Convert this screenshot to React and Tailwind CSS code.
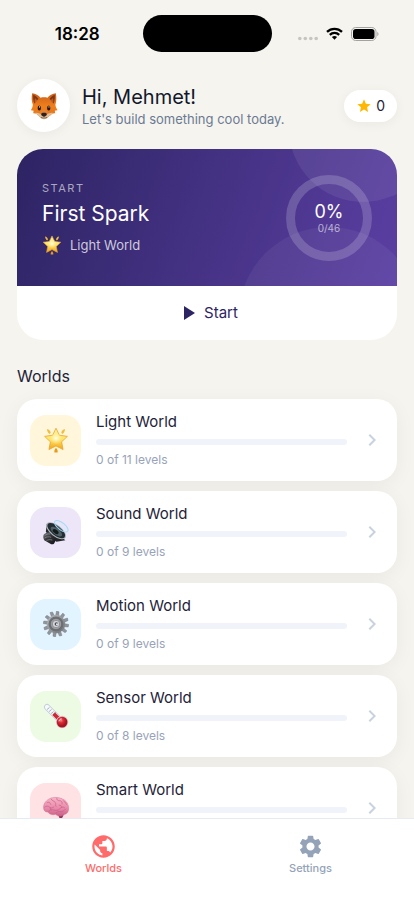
import {MdPublic, MdSettings, MdStar, MdPlayArrow, MdChevronRight} from 'react-icons/md';

function FoxIcon({className}){
	return (
		<svg viewBox="0 0 32 32" className={className} aria-hidden="true">
			<defs>
				<linearGradient id="foxFace" x1="0" y1="0" x2="0" y2="1">
					<stop offset="0" stopColor="#c9601b"/>
					<stop offset=".5" stopColor="#f07f1c"/>
					<stop offset="1" stopColor="#e0701a"/>
				</linearGradient>
			</defs>
			<path d="M2.500 1.500c3.700.3 7.500 2.500 9.500 5 2.500-.7 5.500-.7 8 0 2-2.500 5.800-4.700 9.500-5 1 5 .7 9.500-.5 13 .2 2.500 1.400 4.500 2.500 6.300-1.400.3-2.300.5-3.200.7.3 1 .5 1.800.4 2.800-2.200 0-3.700.7-5.200 2.200C20.700 28.500 18.500 31 16 31s-4.700-2.500-7-4.500c-1.500-1.500-3-2.200-5.200-2.200-.1-1 .1-1.800.4-2.800-.9-.2-1.800-.4-3.200-.7 1.100-1.800 2.100-3.800 2.300-6.300C1.800 11 1.500 6.500 2.500 1.500z" fill="url(#foxFace)"/>
			<path d="M3.700 3c2.500 1 4.800 2.900 6 5-2 1.200-3.700 3.100-4.700 5.300C3.800 10 3.300 6.500 3.700 3zM28.300 3c-2.500 1-4.800 2.900-6 5 2 1.200 3.700 3.100 4.700 5.300 1.200-3.300 1.700-6.800 1.300-10.300z" fill="#7d3616"/>
			<path d="M5.700 7c1.300.7 2.300 1.800 2.700 3-1.200.8-2 1.900-2.700 3.100C5.100 11 5.200 9 5.700 7zM26.300 7c-1.300.7-2.300 1.800-2.700 3 1.200.8 2 1.900 2.700 3.100.6-2.100.5-4.100 0-6.100z" fill="#bd5a28"/>
			<path d="M3.800 24.300c2.200-.9 5-.8 7.200.4 1.500.8 3.300 1 5 1s3.500-.2 5-1c2.200-1.200 5-1.300 7.200-.4-2.200.1-3.700.7-5.200 2.200-2.300 2-4.500 4.500-7 4.500s-4.700-2.500-7-4.500c-1.500-1.500-3-2.100-5.200-2.200z" fill="#dcc19b"/>
			<path d="M11.500 24c1-2.500 2.700-4 4.500-4s3.500 1.500 4.500 4l-2 3.500h-5z" fill="#e48435"/>
			<ellipse cx="10.600" cy="18.200" rx="1.900" ry="2.900" fill="#27170f"/>
			<ellipse cx="21.400" cy="18.200" rx="1.900" ry="2.900" fill="#27170f"/>
			<circle cx="10.900" cy="17" r=".6" fill="#fff"/>
			<circle cx="21.700" cy="17" r=".6" fill="#fff"/>
			<path d="M12.800 25.500c0-1.200 1.400-1.700 3.200-1.700s3.200.5 3.200 1.700-1.700 2.700-3.200 2.700-3.200-1.500-3.200-2.700z" fill="#2b211f"/>
			<path d="M12.500 29c2.300 1 4.700 1 7 0" stroke="#5c4335" strokeWidth=".8" fill="none"/>
		</svg>
	)
}

function GlowStarIcon({className}){
	return (
		<svg viewBox="0 0 32 32" className={className} aria-hidden="true">
			<defs>
				<linearGradient id="glowStar" x1="0" y1="0" x2="0" y2="1">
					<stop offset="0" stopColor="#fff3a3"/>
					<stop offset=".5" stopColor="#ffe66b"/>
					<stop offset="1" stopColor="#f2a317"/>
				</linearGradient>
				<radialGradient id="glowCore">
					<stop offset="0" stopColor="#fffef0"/>
					<stop offset="1" stopColor="#fff3a0" stopOpacity="0"/>
				</radialGradient>
			</defs>
			<path d="M5 2.500c2.300.3 4 2 4.500 4.700L8.200 8.600C5.800 7 5 5 5 2.500zM27 2.500c-2.300.3-4 2-4.500 4.700l1.300 1.400C26.200 7 27 5 27 2.500z" fill="#f3bd35"/>
			<path d="M16 25.500c1.800 2 2.300 3.700 2 5.800h-4c-.3-2.100.2-3.800 2-5.800z" fill="#e99a1b"/>
			<path d="M16 1.500l4.200 8.700 9.800 1.300-7.100 6.800 1.800 9.500L16 23.300l-8.700 4.500 1.800-9.500L2 11.500l9.800-1.300z" fill="url(#glowStar)" stroke="#e9a52a" strokeWidth="1" strokeLinejoin="round"/>
			<circle cx="16" cy="14" r="7.500" fill="url(#glowCore)"/>
		</svg>
	)
}

function SpeakerIcon({className}){
	return (
		<svg viewBox="0 0 32 32" className={className} aria-hidden="true">
			<defs>
				<linearGradient id="speakerBody" x1="0" y1="0" x2="1" y2="1">
					<stop offset="0" stopColor="#77797d"/>
					<stop offset=".45" stopColor="#303236"/>
					<stop offset="1" stopColor="#111214"/>
				</linearGradient>
			</defs>
			<path d="M4.500 6l-1 10 13 12 11-2z" fill="#25272a"/>
			<path d="M.8 19.500c2-2.500 5-3.500 8-3l8.200 7.500-3.500 6.500c-1.500 1-3.200.8-4.500 0L1.500 26c-1.200-1.800-1.500-4.500-.7-6.500z" fill="url(#speakerBody)"/>
			<path d="M2 20.500c2-1.700 4-2.300 6.500-2M2 23.500c2.500-1.700 5-2 8-1M4 27c2-1.700 4.500-2 7.500-1" stroke="#8d8f94" strokeWidth=".9" fill="none"/>
			<ellipse cx="16" cy="14.500" rx="14.500" ry="7" transform="rotate(38 16 14.500)" fill="#aeb4b9"/>
			<ellipse cx="16.300" cy="14.300" rx="13.200" ry="5.900" transform="rotate(38 16.300 14.300)" fill="#222d33"/>
			<ellipse cx="16.500" cy="15.500" rx="8.500" ry="3.700" transform="rotate(38 16.500 15.500)" fill="#4e6167"/>
			<ellipse cx="15.500" cy="15.500" rx="4.200" ry="2.300" transform="rotate(38 15.500 15.500)" fill="#14191c"/>
			<ellipse cx="22.500" cy="9" rx="10" ry="4.500" transform="rotate(38 22.500 9)" fill="#c9ecfa" fillOpacity=".25" stroke="#a5daf0" strokeWidth="1.200"/>
		</svg>
	)
}

function GearIcon({className}){
	const teeth = Array.from({length:12},(_,i)=>i*30)
	return (
		<svg viewBox="0 0 32 32" className={className} aria-hidden="true">
			<defs>
				<linearGradient id="gearMetal" x1="0" y1="0" x2="1" y2="1">
					<stop offset="0" stopColor="#b9bcc0"/>
					<stop offset="1" stopColor="#6d7074"/>
				</linearGradient>
			</defs>
			{
				teeth.map((angle)=>(
					<path key={angle} d="M14 6.500l.4-6.300 3.200.4.500 5.900z" fill="#919499" stroke="#686b70" strokeWidth=".4"
					transform={`rotate(${angle + 8} 16 16)`}/>
				))
			}
			<circle cx="16" cy="16" r="11.300" fill="url(#gearMetal)"/>
			<circle cx="16" cy="16" r="9.200" fill="#6c6f74"/>
			<circle cx="16" cy="16" r="7" fill="#9a9da1" stroke="#5d6064" strokeWidth=".8"/>
			<circle cx="16" cy="16" r="4.500" fill="#d3d5d8" stroke="#6d7074" strokeWidth=".7"/>
			<circle cx="16.500" cy="16" r="2.200" fill="#484b4f"/>
			<circle cx="17.200" cy="16.200" r="1.200" fill="#eef6fb"/>
		</svg>
	)
}

function ThermometerIcon({className}){
	return (
		<svg viewBox="0 0 32 32" className={className} aria-hidden="true">
			<defs>
				<radialGradient id="bulb" cx=".4" cy=".35">
					<stop offset="0" stopColor="#f58a8a"/>
					<stop offset=".4" stopColor="#df2f38"/>
					<stop offset="1" stopColor="#a81420"/>
				</radialGradient>
			</defs>
			<path d="M5 5l17 17" stroke="#c3cbd5" strokeWidth="7.500" strokeLinecap="round"/>
			<path d="M5 5l17 17" stroke="#f6f9fc" strokeWidth="5.500" strokeLinecap="round"/>
			<path d="M13 13l9 9" stroke="#cf2a34" strokeWidth="4.600"/>
			<path d="M5 8l3-2.500M7.500 10.500l3-2.500M10 13l3-2.500M14.500 12.500l1.500-1.500" stroke="#8794a4" strokeWidth=".9"/>
			<circle cx="23.500" cy="23.500" r="7.700" fill="#d8c9cf"/>
			<circle cx="23.500" cy="23.500" r="6.600" fill="url(#bulb)"/>
			<path d="M19.800 22c.3-1.300 1.200-2.200 2.600-2.400" stroke="#fff" strokeWidth="1.200" strokeLinecap="round" fill="none"/>
		</svg>
	)
}

function BrainIcon({className}){
	return (
		<svg viewBox="0 0 32 32" className={className} aria-hidden="true">
			<defs>
				<linearGradient id="brainPink" x1="0" y1="0" x2="0" y2="1">
					<stop offset="0" stopColor="#f7b3c8"/>
					<stop offset=".6" stopColor="#e888a8"/>
					<stop offset="1" stopColor="#c85f86"/>
				</linearGradient>
			</defs>
			<path d="M17 22l8.500 1c-.5 2.500-1 4-2.500 6l-2.500.5c-.5-2.500-1.500-4.500-3.500-6z" fill="#8e3459"/>
			<path d="M16 3C9 2.500 2 7 .8 13.500c-.8 4.500 1.500 7.500 5.200 7.500 2 3 6 4 9.500 2.800 2.500 2.700 7.500 2.700 10.500.2 4-.5 5.800-4 5.500-8.500C31 8 24.500 3.200 16 3z" fill="url(#brainPink)" stroke="#cf6f92" strokeWidth=".6"/>
			<path d="M5 9.500c2.500-1.500 4 0 4.500 2M10 5c1 2.500 3.500 2 5 4s-.5 3.500 1 5M17 4c-.5 2 1 3 3.500 3s3.500 2 3 4M25 7c1 2 3.500 2 4 4.500M2 15c2-2 4.500-1.500 6 0s4 1.500 5.500-.5M7 20.500c1-2.500 4-3 6.500-2s5 .5 7-1.500 4.500-3 6-1.500M20 12.500c1.500 0 3 1 3 2.500M15.500 23c.5-2 3-3 5.500-2.500s5-1 7-3.500M9 15.500c-.5 1.500 0 2.500 1 3" stroke="#c25f86" strokeWidth=".8" strokeLinecap="round" fill="none"/>
		</svg>
	)
}

const worlds = [
	{name:'Light World', total:11, done:0, tile:'bg-[#fff6db]', Icon:GlowStarIcon},
	{name:'Sound World', total:9, done:0, tile:'bg-[#ede5f8]', Icon:SpeakerIcon},
	{name:'Motion World', total:9, done:0, tile:'bg-[#e2f4ff]', Icon:GearIcon},
	{name:'Sensor World', total:8, done:0, tile:'bg-[#edfbe5]', Icon:ThermometerIcon},
	{name:'Smart World', total:9, done:0, tile:'bg-[#ffe2e4]', Icon:BrainIcon},
]

function StatusBar(){
	return (
		<div className="grid grid-cols-[1fr_auto_1fr] items-center pt-[15px] shrink-0">
			<span className="text-center text-[17px] leading-6 font-semibold text-black pl-3">18:28</span>
			<div className="h-[37px] w-[129px] rounded-full bg-black"/>
			<div className="flex items-center justify-center gap-2 pl-1 pr-3">
				<svg viewBox="0 0 20 14" className="h-[14px] w-5" aria-hidden="true">
					<g fill="#c6c5c1">
						<circle cx="1.800" cy="11.500" r="1.800"/>
						<circle cx="7.300" cy="11.500" r="1.800"/>
						<circle cx="12.800" cy="11.500" r="1.800"/>
						<circle cx="18.200" cy="11.500" r="1.800"/>
					</g>
				</svg>
				<svg viewBox="0 0 17 13" className="h-[13px] w-[17px]" aria-hidden="true">
					<g fill="none" stroke="#000" strokeWidth="2.300">
						<path d="M1 4.900a10.800 10.800 0 0 1 15 0"/>
						<path d="M3.800 7.800a6.800 6.800 0 0 1 9.400 0"/>
					</g>
					<path d="M8.500 12.800l-2.600-2.700a3.900 3.900 0 0 1 5.200 0z" fill="#000"/>
				</svg>
				<svg viewBox="0 0 28 14" className="h-[14px] w-7" aria-hidden="true">
					<rect x=".5" y=".5" width="24.500" height="13" rx="4.200" fill="none" stroke="#a3a29f"/>
					<rect x="2" y="2" width="21.500" height="10" rx="2.800" fill="#000"/>
					<path d="M26.300 4.800c1.600.7 1.600 3.700 0 4.400z" fill="#a3a29f"/>
				</svg>
			</div>
		</div>
	)
}

function WorldCard({world}){
	const {name,total,done,tile,Icon} = world
	return (
		<button className="flex w-full items-center rounded-[20px] bg-white p-[13px] text-left shadow-[0_4px_20px_rgba(0,0,0,0.05)] cursor-pointer">
			<div className={`flex h-[51px] w-[51px] shrink-0 items-center justify-center rounded-2xl ${tile}`}>
				<Icon className="h-[26px] w-[26px]"/>
			</div>
			<div className="ml-[15px] flex flex-1 flex-col">
				<h3 className="text-[15px] leading-5 text-[#1e2339]">{name}</h3>
				<div className="mt-[7px] h-[6px] w-full overflow-hidden rounded-full bg-[#f0f3f9]">
					<div className="h-full bg-[#ff6b6b]" style={{width:`${done / total * 100}%`}}/>
				</div>
				<p className="mt-[7px] text-xs leading-4 text-[#97a3b8]">{done} of {total} levels</p>
			</div>
			<MdChevronRight className="ml-[13px] h-6 w-6 shrink-0 text-[#c9d2df]"/>
		</button>
	)
}

export default function App(){
	return (
		<div className="flex h-screen flex-col overflow-hidden bg-[#f5f4ef] font-[Inter,sans-serif]">
			<StatusBar/>
			<main className="flex-1 overflow-y-auto [scrollbar-width:none] px-[17px] pt-[27px] pb-6">
				<header className="flex items-center">
					<div className="flex h-[53px] w-[53px] items-center justify-center rounded-full bg-white shadow-[0_2px_12px_rgba(0,0,0,0.05)]">
						<FoxIcon className="h-7 w-7"/>
					</div>
					<div className="ml-3 flex-1 pt-[2px]">
						<h1 className="text-xl leading-6 text-[#12172b]">Hi, Mehmet!</h1>
						<p className="text-[13px] leading-5 text-[#6b7a92]">Let's build something cool today.</p>
					</div>
					<div className="flex h-8 items-center gap-1 rounded-full bg-white px-3 shadow-[0_2px_12px_rgba(0,0,0,0.05)]">
						<MdStar className="h-4 w-4 text-[#ffb703]"/>
						<span className="text-sm text-[#1e2339]">0</span>
					</div>
				</header>

				<section className="mt-[17px] overflow-hidden rounded-[26px] bg-white">
					<div className="relative flex items-center justify-between overflow-hidden bg-[linear-gradient(110deg,#2d2463,#5b3fa3)] h-[137px] pl-[25px] pr-[25px]">
						<div className="absolute -top-[95px] -right-10 h-[148px] w-[148px] rounded-full bg-white/7"/>
						<div className="absolute -bottom-[121px] -right-[22px] h-[180px] w-[180px] rounded-full bg-white/5"/>
						<div className="relative">
							<p className="text-[11px] leading-4 tracking-[1.5px] text-white/60">START</p>
							<h2 className="mt-1 text-[21px] leading-7 text-white">First Spark</h2>
							<div className="mt-[7px] flex items-center gap-2 text-white/75">
								<GlowStarIcon className="h-5 w-5"/>
								<span className="text-[13px] leading-5">Light World</span>
							</div>
						</div>
						<div className="relative grid place-items-center">
							<svg viewBox="0 0 86 86" className="col-start-1 row-start-1 h-[86px] w-[86px]" aria-hidden="true">
								<circle cx="43" cy="43" r="38.500" fill="none" stroke="#fff" strokeOpacity=".18" strokeWidth="9"/>
							</svg>
							<div className="col-start-1 row-start-1 text-center">
								<p className="text-lg leading-5 text-white">0%</p>
								<p className="text-[10px] leading-3 text-white/60">0/46</p>
							</div>
						</div>
					</div>
					<button className="flex h-[54px] w-full items-center justify-center gap-1 text-[#2d2463] cursor-pointer">
						<MdPlayArrow className="h-6 w-6"/>
						<span className="text-[15px] leading-5">Start</span>
					</button>
				</section>

				<h2 className="mt-6 text-base leading-6 text-[#1e2339]">Worlds</h2>
				<div className="mt-[11px] flex flex-col gap-[10px]">
					{
						worlds.map((world)=>(
							<WorldCard key={world.name} world={world}/>
						))
					}
				</div>
			</main>

			<nav className="relative grid h-[82px] shrink-0 grid-cols-2 items-start border-t border-[#e6eaf1] bg-white pt-[14px]">
				<a href="#worlds" className="flex flex-col items-center text-[#ff6b6b]">
					<MdPublic className="h-[27px] w-[27px]"/>
					<span className="text-[11px] leading-4 font-medium">Worlds</span>
				</a>
				<a href="#settings" className="flex flex-col items-center text-[#94a3b8]">
					<MdSettings className="h-[27px] w-[27px]"/>
					<span className="text-[11px] leading-4 font-medium">Settings</span>
				</a>
			</nav>
		</div>
	)
}
